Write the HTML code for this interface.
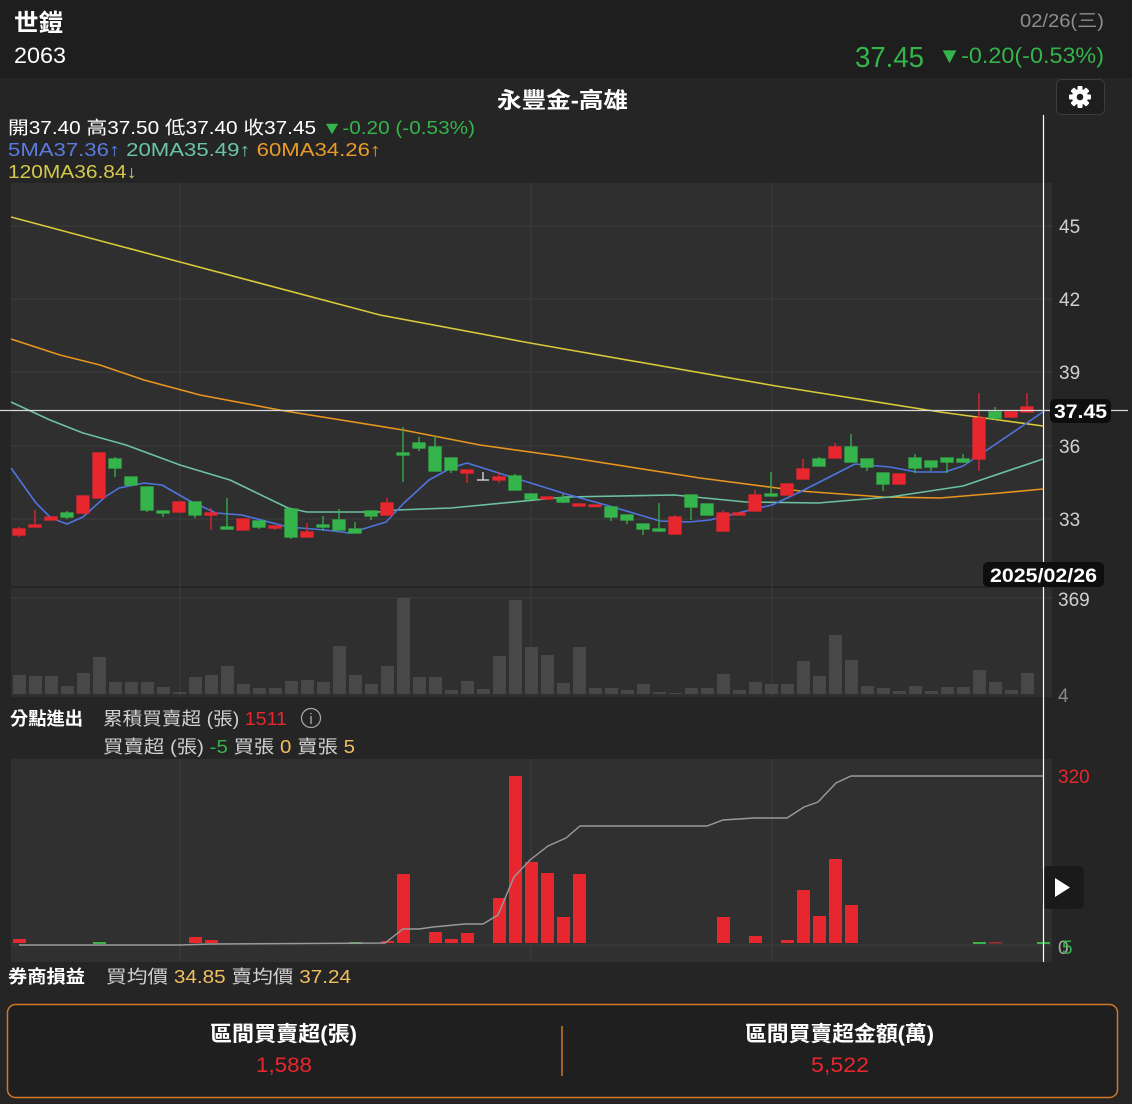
<!DOCTYPE html>
<html><head><meta charset="utf-8"><style>
html,body{margin:0;padding:0;background:#252525;width:1132px;height:1104px;overflow:hidden}
svg{display:block}
text{font-family:"Liberation Sans","Noto Sans CJK TC",sans-serif}
</style></head><body>
<svg width="1132" height="1104" viewBox="0 0 1132 1104" xmlns="http://www.w3.org/2000/svg">
<rect x="0" y="0" width="1132" height="1104" fill="#252525"/>
<rect x="0" y="0" width="1132" height="78" fill="#1e1e1e"/>
<text x="14" y="31" font-size="24" font-weight="bold" fill="#fff" textLength="49" lengthAdjust="spacingAndGlyphs">世鎧</text>
<text x="14" y="63" font-size="22" fill="#fff" textLength="52" lengthAdjust="spacingAndGlyphs">2063</text>
<text x="1020" y="27" font-size="18" fill="#8e8e8e" textLength="84" lengthAdjust="spacingAndGlyphs">02/26(三)</text>
<text x="938" y="63" font-size="22" fill="#34b44a" textLength="166" lengthAdjust="spacingAndGlyphs">▼-0.20(-0.53%)</text>
<text x="855" y="67" font-size="29" fill="#34b44a" textLength="69" lengthAdjust="spacingAndGlyphs">37.45</text>
<text x="497" y="108" font-size="22" fill="#fff" textLength="131" lengthAdjust="spacingAndGlyphs" font-weight="bold">永豐金-高雄</text>
<rect x="1056.5" y="79.5" width="48" height="35" rx="5" fill="#1e1e1e" stroke="#3c3c3c"/>
<g transform="translate(1080,97)" fill="#fff">
<circle r="8"/>
<g><rect x="-2.5" y="-11" width="5" height="22" rx="1"/><rect x="-2.5" y="-11" width="5" height="22" rx="1" transform="rotate(45)"/><rect x="-2.5" y="-11" width="5" height="22" rx="1" transform="rotate(90)"/><rect x="-2.5" y="-11" width="5" height="22" rx="1" transform="rotate(135)"/></g>
<circle r="3.3" fill="#1e1e1e"/>
</g>
<text x="8" y="134" font-size="18" fill="#fff" textLength="467" lengthAdjust="spacingAndGlyphs">開37.40 高37.50 低37.40 收37.45 <tspan fill="#34b44a">▼-0.20 (-0.53%)</tspan></text>
<text x="8" y="156" font-size="18" textLength="373" lengthAdjust="spacingAndGlyphs"><tspan fill="#5b7be0">5MA37.36↑</tspan><tspan fill="#6ac5a5">  20MA35.49↑</tspan><tspan fill="#e89b28">  60MA34.26↑</tspan></text>
<text x="8" y="178" font-size="18" fill="#d4c84a" textLength="129" lengthAdjust="spacingAndGlyphs">120MA36.84↓</text>

<rect x="11" y="183" width="1041" height="403" fill="#2f2f2f"/>
<rect x="11" y="588" width="1041" height="109" fill="#2f2f2f"/>
<g stroke="#3c3c3c" stroke-width="1">
<line x1="11" y1="226" x2="1052" y2="226"/><line x1="11" y1="299" x2="1052" y2="299"/><line x1="11" y1="372" x2="1052" y2="372"/><line x1="11" y1="446" x2="1052" y2="446"/><line x1="11" y1="519" x2="1052" y2="519"/>
<line x1="180" y1="183" x2="180" y2="697"/><line x1="531" y1="183" x2="531" y2="697"/><line x1="772" y1="183" x2="772" y2="697"/>
<line x1="11" y1="598" x2="1052" y2="598"/>
</g>
<g fill="#d0d0d0" font-size="19">
<text x="1059" y="233">45</text><text x="1059" y="306">42</text><text x="1059" y="379">39</text><text x="1059" y="453">36</text><text x="1059" y="526">33</text>
<text x="1058" y="606">369</text><text x="1058" y="702" fill="#888">4</text>
</g>
<g fill="#484848">
<rect x="13" y="675" width="13" height="19"/><rect x="29" y="676" width="13" height="18"/><rect x="45" y="676" width="13" height="18"/><rect x="61" y="686" width="13" height="8"/><rect x="77" y="673" width="13" height="21"/><rect x="93" y="657" width="13" height="37"/><rect x="109" y="682" width="13" height="12"/><rect x="125" y="682" width="13" height="12"/><rect x="141" y="682" width="13" height="12"/><rect x="157" y="687" width="13" height="7"/>
<rect x="173" y="692" width="13" height="2"/><rect x="189" y="677" width="13" height="17"/><rect x="205" y="675" width="13" height="19"/><rect x="221" y="666" width="13" height="28"/><rect x="237" y="684" width="13" height="10"/><rect x="253" y="688" width="13" height="6"/><rect x="269" y="688" width="13" height="6"/><rect x="285" y="681" width="13" height="13"/><rect x="301" y="680" width="13" height="14"/><rect x="317" y="682" width="13" height="12"/>
<rect x="333" y="646" width="13" height="48"/><rect x="349" y="675" width="13" height="19"/><rect x="365" y="684" width="13" height="10"/><rect x="381" y="666" width="13" height="28"/><rect x="397" y="598" width="13" height="96"/><rect x="413" y="677" width="13" height="17"/><rect x="429" y="677" width="13" height="17"/><rect x="445" y="690" width="13" height="4"/><rect x="461" y="681" width="13" height="13"/><rect x="477" y="689" width="13" height="5"/>
<rect x="493" y="656" width="13" height="38"/><rect x="509" y="600" width="13" height="94"/><rect x="525" y="647" width="13" height="47"/><rect x="541" y="655" width="13" height="39"/><rect x="557" y="683" width="13" height="11"/>
<rect x="573" y="647" width="13" height="47"/><rect x="589" y="688" width="13" height="6"/><rect x="605" y="688" width="13" height="6"/><rect x="621" y="690" width="13" height="4"/><rect x="637" y="684" width="13" height="10"/><rect x="653" y="692" width="13" height="2"/><rect x="669" y="693" width="13" height="1"/><rect x="685" y="688" width="13" height="6"/><rect x="701" y="688" width="13" height="6"/><rect x="717" y="674" width="13" height="20"/>
<rect x="733" y="690" width="13" height="4"/><rect x="749" y="682" width="13" height="12"/><rect x="765" y="684" width="13" height="10"/><rect x="781" y="684" width="13" height="10"/><rect x="797" y="661" width="13" height="33"/><rect x="813" y="676" width="13" height="18"/><rect x="829" y="635" width="13" height="59"/><rect x="845" y="660" width="13" height="34"/><rect x="861" y="686" width="13" height="8"/><rect x="877" y="688" width="13" height="6"/>
<rect x="893" y="691" width="13" height="3"/><rect x="909" y="686" width="13" height="8"/><rect x="925" y="691" width="13" height="3"/><rect x="941" y="687" width="13" height="7"/><rect x="957" y="687" width="13" height="7"/><rect x="973" y="670" width="13" height="24"/><rect x="989" y="682" width="13" height="12"/><rect x="1005" y="690" width="13" height="4"/><rect x="1021" y="673" width="13" height="21"/>
</g>
<g fill="none" stroke-width="1.6" stroke-linejoin="round">
<polyline stroke="#d8c83a" points="11,217 180,262 380,315 530,343 776,386 940,412 1043,426"/>
<polyline stroke="#e8961e" points="11,339 60,355 100,365 144,380 200,395 285,411 403,430 480,445 566,457 700,478 800,491 883,497 940,498 1000,493 1043,489"/>
<polyline stroke="#6cc2a0" points="11,402 50,420 83,433 126,445 180,465 230,480 288,508 307,512 379,512 397,510 451,508 566,497 674,495 746,502 818,503 890,497 963,486 1043,459"/>
<polyline stroke="#4f74e0" points="11,468 36,503 51,518 67,524 83,517 105,497 119,488 144,483 162,485 188,500 216,513 242,515 288,527 325,530 350,533 386,522 404,503 429,480 451,468 467,463 505,475 566,494 613,507 660,521 689,522 710,520 746,511 772,505 800,492 855,464 890,467 916,472 945,472 963,466 984,452 1043,412"/>
</g>
<g stroke-width="1.3">
<g stroke="#e8262e" fill="#e8262e">
<line x1="19" y1="527" x2="19" y2="537"/><rect x="13" y="529" width="12" height="6"/>
<line x1="35" y1="510" x2="35" y2="527"/><rect x="29" y="525" width="12" height="2"/>
<rect x="45" y="517" width="12" height="3"/>
<line x1="83" y1="495" x2="83" y2="514"/><rect x="77" y="496" width="12" height="17"/>
<rect x="93" y="453" width="12" height="45"/>
<rect x="173" y="502" width="12" height="10"/>
<line x1="211" y1="508" x2="211" y2="530"/><rect x="205" y="513" width="12" height="2"/>
<rect x="237" y="519" width="12" height="11"/>
<line x1="275" y1="526" x2="275" y2="530"/><rect x="269" y="526" width="12" height="2"/>
<line x1="307" y1="523" x2="307" y2="537"/><rect x="301" y="532" width="12" height="5"/>
<line x1="387" y1="498" x2="387" y2="516"/><rect x="381" y="503" width="12" height="12"/>
<line x1="467" y1="470" x2="467" y2="483"/><rect x="461" y="470" width="12" height="3"/>
<line x1="499" y1="472" x2="499" y2="483"/><rect x="493" y="477" width="12" height="3"/>
<rect x="541" y="497" width="12" height="2"/>
<rect x="573" y="504" width="12" height="2"/><rect x="589" y="505" width="12" height="1.5"/>
<line x1="675" y1="515" x2="675" y2="535"/><rect x="669" y="517" width="12" height="17"/>
<line x1="723" y1="510" x2="723" y2="531"/><rect x="717" y="513" width="12" height="18"/>
<rect x="733" y="513" width="12" height="2"/>
<line x1="755" y1="490" x2="755" y2="511"/><rect x="749" y="495" width="12" height="16"/>
<rect x="781" y="484" width="12" height="11"/>
<line x1="803" y1="459" x2="803" y2="479"/><rect x="797" y="469" width="12" height="10"/>
<line x1="835" y1="443" x2="835" y2="458"/><rect x="829" y="447" width="12" height="11"/>
<rect x="893" y="474" width="12" height="10"/>
<line x1="979" y1="393" x2="979" y2="471"/><rect x="973" y="418" width="12" height="41"/>
<rect x="1005" y="412" width="12" height="5"/>
<line x1="1027" y1="393" x2="1027" y2="412"/><rect x="1021" y="407" width="12" height="5"/>
</g>
<g stroke="#34b44a" fill="#34b44a">
<line x1="67" y1="511" x2="67" y2="519"/><rect x="61" y="513" width="12" height="4"/>
<line x1="115" y1="457" x2="115" y2="477"/><rect x="109" y="459" width="12" height="9"/>
<rect x="125" y="477" width="12" height="8"/>
<line x1="147" y1="487" x2="147" y2="512"/><rect x="141" y="487" width="12" height="23"/>
<line x1="163" y1="511" x2="163" y2="517"/><rect x="157" y="511" width="12" height="2"/>
<line x1="195" y1="502" x2="195" y2="518"/><rect x="189" y="502" width="12" height="13"/>
<line x1="227" y1="498" x2="227" y2="529"/><rect x="221" y="527" width="12" height="2"/>
<line x1="259" y1="521" x2="259" y2="529"/><rect x="253" y="521" width="12" height="6"/>
<line x1="291" y1="509" x2="291" y2="539"/><rect x="285" y="509" width="12" height="28"/>
<line x1="323" y1="516" x2="323" y2="531"/><rect x="317" y="525" width="12" height="2"/>
<line x1="339" y1="509" x2="339" y2="530"/><rect x="333" y="520" width="12" height="10"/>
<line x1="355" y1="522" x2="355" y2="533"/><rect x="349" y="529" width="12" height="4"/>
<line x1="371" y1="511" x2="371" y2="520"/><rect x="365" y="511" width="12" height="5"/>
<line x1="403" y1="427" x2="403" y2="482"/><rect x="397" y="453" width="12" height="2"/>
<line x1="419" y1="437" x2="419" y2="451"/><rect x="413" y="443" width="12" height="5"/>
<line x1="435" y1="436" x2="435" y2="471"/><rect x="429" y="447" width="12" height="24"/>
<line x1="451" y1="458" x2="451" y2="473"/><rect x="445" y="458" width="12" height="12"/>
<line x1="515" y1="474" x2="515" y2="490"/><rect x="509" y="476" width="12" height="14"/>
<rect x="525" y="494" width="12" height="5"/>
<line x1="563" y1="494" x2="563" y2="503"/><rect x="557" y="498" width="12" height="4"/>
<line x1="611" y1="507" x2="611" y2="521"/><rect x="605" y="507" width="12" height="10"/>
<line x1="627" y1="515" x2="627" y2="524"/><rect x="621" y="515" width="12" height="5"/>
<line x1="643" y1="524" x2="643" y2="535"/><rect x="637" y="524" width="12" height="5"/>
<line x1="659" y1="503" x2="659" y2="531"/><rect x="653" y="529" width="12" height="2"/>
<line x1="691" y1="495" x2="691" y2="520"/><rect x="685" y="495" width="12" height="12"/>
<rect x="701" y="504" width="12" height="11"/>
<line x1="771" y1="472" x2="771" y2="496"/><rect x="765" y="494" width="12" height="2"/>
<line x1="819" y1="457" x2="819" y2="466"/><rect x="813" y="459" width="12" height="7"/>
<line x1="851" y1="434" x2="851" y2="462"/><rect x="845" y="447" width="12" height="15"/>
<line x1="867" y1="459" x2="867" y2="471"/><rect x="861" y="459" width="12" height="8"/>
<line x1="883" y1="473" x2="883" y2="491"/><rect x="877" y="473" width="12" height="11"/>
<line x1="915" y1="454" x2="915" y2="473"/><rect x="909" y="458" width="12" height="10"/>
<line x1="931" y1="461" x2="931" y2="471"/><rect x="925" y="461" width="12" height="6"/>
<line x1="947" y1="458" x2="947" y2="473"/><rect x="941" y="458" width="12" height="4"/>
<line x1="963" y1="454" x2="963" y2="463"/><rect x="957" y="459" width="12" height="3"/>
<line x1="995" y1="407" x2="995" y2="420"/><rect x="989" y="412" width="12" height="6"/>
</g>
<g stroke="#e0e0e0"><line x1="483" y1="472" x2="483" y2="480"/><line x1="477" y1="480" x2="489" y2="480"/></g>
</g>

<text x="10" y="725" font-size="18" fill="#fff" textLength="73" lengthAdjust="spacingAndGlyphs" font-weight="bold">分點進出</text>
<text x="103" y="725" font-size="18" fill="#cfcfcf" textLength="184" lengthAdjust="spacingAndGlyphs">累積買賣超 (張) <tspan fill="#e8262e">1511</tspan></text>
<circle cx="311" cy="718" r="9.5" fill="none" stroke="#aaa" stroke-width="1.2"/><text x="311" y="724" font-size="15" fill="#aaa" text-anchor="middle" font-family="Liberation Serif">i</text>
<text x="103" y="753" font-size="18" fill="#cfcfcf" textLength="252" lengthAdjust="spacingAndGlyphs">買賣超 (張) <tspan fill="#34b44a">-5</tspan> 買張 <tspan fill="#f0c060">0</tspan> 賣張 <tspan fill="#f0c060">5</tspan></text>

<rect x="11" y="759" width="1041" height="203" fill="#303030"/>
<g stroke="#3c3c3c"><line x1="180" y1="759" x2="180" y2="962"/><line x1="531" y1="759" x2="531" y2="962"/><line x1="772" y1="759" x2="772" y2="962"/><line x1="11" y1="945" x2="1052" y2="945"/></g>
<g fill="#e8262e">
<rect x="13" y="939" width="13" height="4"/><rect x="189" y="937" width="13" height="6"/><rect x="205" y="940" width="13" height="3"/><rect x="381" y="941" width="13" height="2"/>
<rect x="397" y="874" width="13" height="69"/><rect x="429" y="932" width="13" height="11"/><rect x="445" y="939" width="13" height="4"/><rect x="461" y="933" width="13" height="10"/>
<rect x="493" y="898" width="13" height="45"/><rect x="509" y="776" width="13" height="167"/><rect x="525" y="862" width="13" height="81"/><rect x="541" y="873" width="13" height="70"/><rect x="557" y="917" width="13" height="26"/><rect x="573" y="874" width="13" height="69"/>
<rect x="717" y="917" width="13" height="26"/><rect x="749" y="936" width="13" height="7"/><rect x="781" y="940" width="13" height="3"/>
<rect x="797" y="890" width="13" height="53"/><rect x="813" y="916" width="13" height="27"/><rect x="829" y="859" width="13" height="84"/><rect x="845" y="905" width="13" height="38"/>
<rect x="989" y="942" width="13" height="1.5" fill="#a03030"/>
</g>
<g fill="#34b44a"><rect x="93" y="942" width="13" height="2"/><rect x="349" y="942" width="13" height="2"/><rect x="973" y="942" width="13" height="2"/><rect x="1037" y="942" width="13" height="2"/></g>
<polyline fill="none" stroke="#9a9a9a" stroke-width="1.4" points="19,945 180,945 211,944 385,943 403,929 419,929 433,927 465,924 483,924 498,915 514,877 530,860 548,846 566,838 580,826 707,826 723,820 754,818 787,818 804,807 818,802 836,783 851,776 963,776 1043,776"/>
<text x="1058" y="783" font-size="19" fill="#e8262e">320</text>
<text x="1058" y="954" font-size="19" fill="#aaa">0</text><text x="1062" y="954" font-size="19" fill="#34b44a">5</text>
<rect x="1042" y="866" width="42" height="43" rx="5" fill="#1a1a1a"/>
<polygon points="1055,878 1055,897 1070,887.5" fill="#fff"/>

<text x="8" y="983" font-size="18" fill="#fff" textLength="77" lengthAdjust="spacingAndGlyphs" font-weight="bold">券商損益</text>
<text x="106" y="983" font-size="18" fill="#cfcfcf" textLength="245" lengthAdjust="spacingAndGlyphs">買均價 <tspan fill="#f0c060">34.85</tspan> 賣均價 <tspan fill="#f0c060">37.24</tspan></text>

<line x1="1043.5" y1="115" x2="1043.5" y2="962" stroke="#fff" stroke-width="1.2"/>
<line x1="0" y1="410.5" x2="1128" y2="410.5" stroke="#d8d8d8" stroke-width="1.2"/>
<rect x="1050" y="399" width="61" height="24" rx="5" fill="#0e0e0e"/>
<text x="1054" y="418" font-size="19" fill="#fff" font-weight="bold" textLength="53" lengthAdjust="spacingAndGlyphs">37.45</text>
<rect x="983" y="562" width="121" height="25" rx="5" fill="#0e0e0e"/>
<text x="990" y="582" font-size="19" fill="#fff" font-weight="bold" textLength="107" lengthAdjust="spacingAndGlyphs">2025/02/26</text>

<rect x="7.5" y="1004.5" width="1110" height="93" rx="8" fill="#1f1f1f" stroke="#d2782a" stroke-width="1.5"/>
<line x1="562" y1="1026" x2="562" y2="1076" stroke="#d2782a" stroke-width="1.5"/>
<text x="210" y="1041" font-size="21" fill="#fff" font-weight="bold" textLength="147" lengthAdjust="spacingAndGlyphs">區間買賣超(張)</text>
<text x="256" y="1072" font-size="21" fill="#e8262e" textLength="56" lengthAdjust="spacingAndGlyphs">1,588</text>
<text x="745" y="1041" font-size="21" fill="#fff" font-weight="bold" textLength="189" lengthAdjust="spacingAndGlyphs">區間買賣超金額(萬)</text>
<text x="811" y="1072" font-size="21" fill="#e8262e" textLength="58" lengthAdjust="spacingAndGlyphs">5,522</text>
</svg>
</body></html>
